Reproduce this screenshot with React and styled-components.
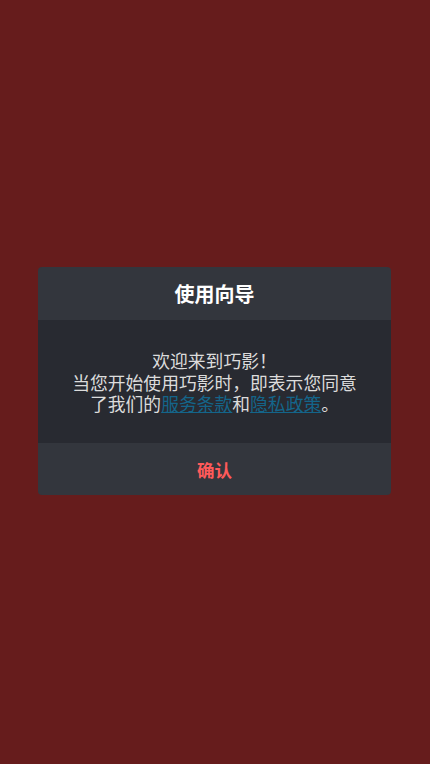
import React from "react";
import styled, { createGlobalStyle } from "styled-components";

const Global = createGlobalStyle`
  html, body { margin: 0; padding: 0; height: 100%; }
  body { background: #661c1c; font-family: "Noto Sans CJK SC", "Noto Sans", sans-serif; }
  #root { height: 100%; }
`;

const Screen = styled.div`
  width: 430px;
  height: 764px;
  background: #661c1c;
  display: flex;
  flex-direction: column;
  padding: 267px 39px 0 38px;
  box-sizing: border-box;
`;

const Dialog = styled.div`
  border-radius: 4px;
  overflow: hidden;
  display: flex;
  flex-direction: column;
`;

const Header = styled.div`
  height: 53px;
  background: #33363d;
  display: flex;
  align-items: center;
  justify-content: center;
  color: #ffffff;
  font-size: 20px;
  font-weight: 700;
`;

const Body = styled.div`
  height: 123px;
  background: #282a31;
  display: flex;
  align-items: center;
  justify-content: center;
  text-align: center;
  color: #dcdcdc;
  font-size: 17.8px;
  line-height: 21.5px;
  box-sizing: border-box;
  padding-top: 2px;
`;

const Message = styled.p`
  margin: 0;
`;

const Link = styled.a`
  color: #14658a;
  text-decoration: underline;
`;

const Footer = styled.div`
  height: 52px;
  background: #33363d;
  display: flex;
  align-items: center;
  justify-content: center;
  color: #ff5a5a;
  font-size: 17.5px;
  font-weight: 700;
`;

export default function App() {
  return (
    <>
      <Global />
      <Screen>
        <Dialog>
          <Header>使用向导</Header>
          <Body>
            <Message>
              欢迎来到巧影！
              <br />
              当您开始使用巧影时，即表示您同意
              <br />
              了我们的<Link>服务条款</Link>和<Link>隐私政策</Link>。
            </Message>
          </Body>
          <Footer>确认</Footer>
        </Dialog>
      </Screen>
    </>
  );
}
